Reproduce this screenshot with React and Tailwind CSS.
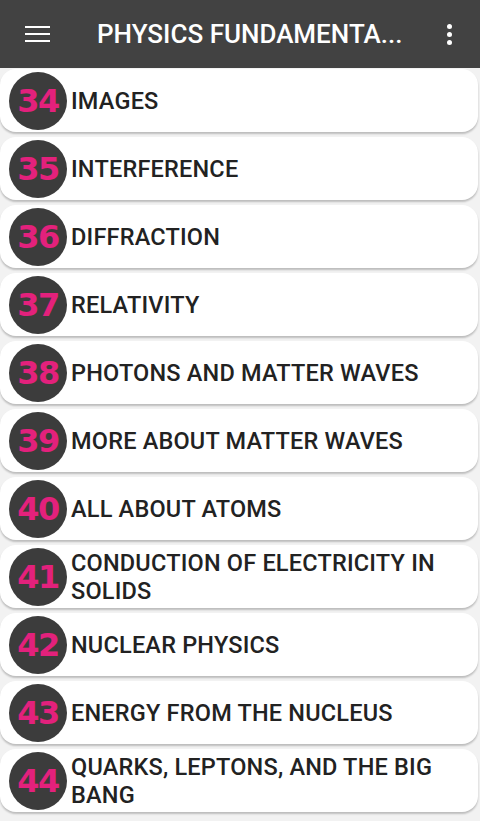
const chapters = [
  [34, 'IMAGES'],
  [35, 'INTERFERENCE'],
  [36, 'DIFFRACTION'],
  [37, 'RELATIVITY'],
  [38, 'PHOTONS AND MATTER WAVES'],
  [39, 'MORE ABOUT MATTER WAVES'],
  [40, 'ALL ABOUT ATOMS'],
  [41, 'CONDUCTION OF ELECTRICITY IN SOLIDS'],
  [42, 'NUCLEAR PHYSICS'],
  [43, 'ENERGY FROM THE NUCLEUS'],
  [44, 'QUARKS, LEPTONS, AND THE BIG BANG'],
]

function ChapterRow({ num, title }) {
  return (
    <div className="mb-[5px] mr-[2px] flex h-[63px] items-center rounded-[16px] bg-white pl-[9px] shadow-[0_2px_2px_rgba(0,0,0,0.22)]">
      <div className="grid h-[58px] w-[58px] shrink-0 place-items-center rounded-full bg-[#3c3c3c]">
        <span className="font-['DejaVu_Sans',sans-serif] text-[32px] font-bold leading-none tracking-[-1.5px] text-[#e3217c]">
          {num}
        </span>
      </div>
      <p className="ml-[4px] pr-4 text-[23.5px] font-medium leading-[28px] tracking-[0.2px] text-[#222]">{title}</p>
    </div>
  )
}

export default function App() {
  return (
    <div className="h-[821px] w-[480px] overflow-hidden bg-[#f2f2f2] font-['Roboto',sans-serif]">
      {/* 툴바 */}
      <header className="flex h-[68px] items-center bg-[#424242] text-white">
        <div className="ml-[25px] flex w-[25px] flex-col gap-[5px]">
          <span className="h-[2px] bg-white" />
          <span className="h-[2px] bg-white" />
          <span className="h-[2px] bg-white" />
        </div>
        <h1 className="ml-[47px] flex-1 text-[26px] font-medium">PHYSICS FUNDAMENTA...</h1>
        <div className="mr-[28px] flex flex-col gap-[3px]">
          <span className="h-[5px] w-[5px] rounded-full bg-white" />
          <span className="h-[5px] w-[5px] rounded-full bg-white" />
          <span className="h-[5px] w-[5px] rounded-full bg-white" />
        </div>
      </header>

      {/* 챕터 목록 */}
      <div className="pt-[1px]">
        {chapters.map(([n, t]) => (
          <ChapterRow key={n} num={n} title={t} />
        ))}
      </div>
    </div>
  )
}
